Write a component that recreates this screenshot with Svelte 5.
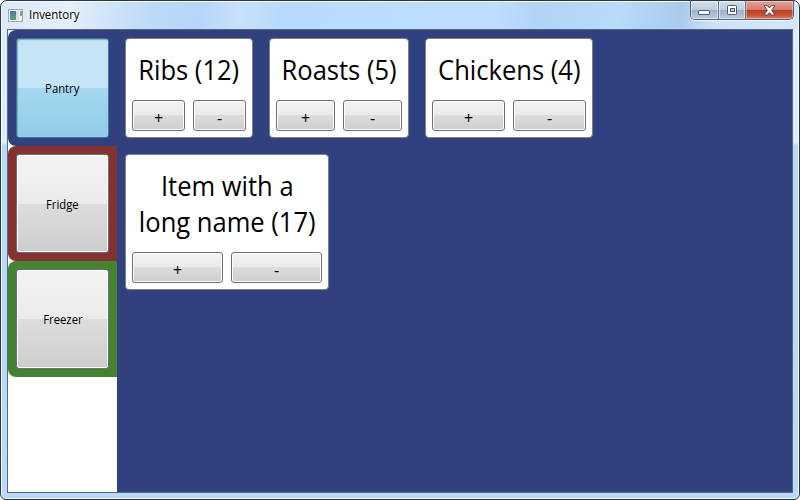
<script>
  const places = [
    { name: 'Pantry', tone: 'blue', selected: true },
    { name: 'Fridge', tone: 'red', selected: false },
    { name: 'Freezer', tone: 'green', selected: false }
  ];
  const items = [
    { lines: ['Ribs (12)'], width: 128 },
    { lines: ['Roasts (5)'], width: 140 },
    { lines: ['Chickens (4)'], width: 168 },
    { lines: ['Item with a', 'long name (17)'], width: 204 }
  ];
</script>

<div class="window">
  <header>
    <svg class="app" width="15" height="13" viewBox="0 0 15 13">
      <defs>
        <linearGradient id="pic" x2="0" y2="1">
          <stop stop-color="#4878a8" /><stop offset="1" stop-color="#57a878" />
        </linearGradient>
      </defs>
      <rect x=".5" y=".5" width="14" height="12" fill="#f5f5f5" stroke="#a0a5a9" />
      <rect x="2" y="2" width="6" height="9" fill="url(#pic)" />
      <rect x="8" y="2" width="3" height="9" fill="#dfe1df" />
      <rect x="12" y="2" width="2" height="5" fill="#73a88e" />
    </svg>
    <span class="caption">Inventory</span>
    <div class="controls">
      <i class="min"><svg width="13" height="6"><rect x=".5" y=".5" width="11" height="4" rx=".5" fill="#fff" stroke="#515b70" /></svg></i>
      <i class="max"><svg width="12" height="10"><rect x="1.5" y=".5" width="9" height="9" rx=".8" fill="#fff" stroke="#515b70" /><rect x="4.5" y="3.5" width="4" height="3" fill="#b9c6d6" stroke="#515b70" /></svg></i>
      <i class="close"><svg width="13" height="11" viewBox="0 0 13 11"><path d="M1 .7H4.5L6.5 3L8.500 .7H12L8.600 5.300L12 10H8.500L6.500 7.600L4.500 10H1L4.400 5.300Z" fill="#fff" stroke="#53556a" /></svg></i>
    </div>
  </header>
  <main>
    <nav>
      {#each places as place}
        <div class="tab {place.tone}">
          <button class:selected={place.selected}><span>{place.name}</span></button>
        </div>
      {/each}
    </nav>
    <section>
      {#each items as item}
        <article style="width: {item.width}px">
          <h2>{#each item.lines as line}<span>{line}</span>{/each}</h2>
          <div class="actions"><button>+</button><button>-</button></div>
        </article>
      {/each}
    </section>
  </main>
</div>

<style>
  :global(body) { background: #fff; }
  * { box-sizing: border-box; }
  .window {
    width: 800px; height: 500px; display: flex; flex-direction: column;
    padding: 0 6px 6px; border: 1px solid #2f3641; border-radius: 7px 7px 6px 6px;
    overflow: hidden; color: #000; font-family: "Open Sans", "Noto Sans", sans-serif;
    background:
      linear-gradient(#e0edfb 0, #deedfc 114px, #b7d8f8 116px, #b9dafa 100%) 0 28px / 100% 100% no-repeat,
      linear-gradient(100deg, #d9e8f8 0, #e4effb 8%, #bddaf8 17%, #b5d6f8 23%, #c8e1fb 27%, #b8dafb 32%, #bddeff 56%, #b2d4f4 61%, #b9dbfa 70%, #a9cced 77%, #cee3f8 81%, #d8eafb 100%);
    box-shadow: inset 0 0 0 1px #f3faff;
  }
  header { height: 28px; display: flex; align-items: flex-start; flex: none; }
  .app { margin: 8px 6px 0 1px; }
  .caption { font-size: 12px; line-height: 16px; margin-top: 6px; transform: scaleX(.95); transform-origin: left; text-shadow: 0 0 6px #fff, 0 0 8px #fff; }
  .controls {
    margin-left: auto; margin-right: -1px; height: 19px; display: flex;
    border: 1px solid #566273; border-top: 0; border-radius: 0 0 5px 5px; overflow: hidden;
    box-shadow: 0 1px 0 #eef7ff;
  }
  .controls i { display: flex; align-items: center; justify-content: center; height: 18px; border-right: 1px solid #66758a; box-shadow: inset 0 0 0 1px #ffffff80; background: linear-gradient(#d2dfed 0, #bdcddd 48%, #9db1c8 50%, #b7cce2 100%); }
  .controls .min { width: 28px; padding-top: 6px; }
  .controls .max { width: 27px; }
  .controls .close { width: 47px; border: 0; background: linear-gradient(#e6a295 0, #d67c6c 48%, #bd3b27 50%, #c75438 80%, #df8669 100%); box-shadow: inset 0 0 0 1px #ffffff60; }
  main { width: 786px; height: 465px; border: 1px solid #596779; display: flex; background: #fff; }
  nav { width: 109px; flex: none; display: flex; flex-direction: column; }
  .tab { height: 116px; padding: 8px; border-radius: 8px 0 0 8px; flex: none; }
  .blue { background: #31407f; }
  .red { background: #843131; height: 115px; }
  .green { background: #438331; }
  button {
    font-family: inherit; color: #000; padding: 0; margin: 0;
    border: 1px solid #707070; border-radius: 3px; box-shadow: inset 0 0 0 1px #fbfbfb;
    background: linear-gradient(#f3f3f3 0, #ebebeb 50%, #dddddd 50%, #cdcdcd 100%);
  }
  .tab button { display: flex; align-items: center; justify-content: center; width: 93px; height: 100px; font-size: 12px; line-height: 16px; padding-top: 2px; }
  .red button { height: 99px; }
  .tab span { transform: scaleX(.94); }
  .tab .selected { border-color: #3c7894; box-shadow: inset 1px 1px 1px #82a9bb; background: linear-gradient(#c4e5f6 0, #c4e5f6 50%, #a6d8f0 50%, #90cbea 100%); }
  section { flex: 1; background: #31407f; padding: 8px; display: flex; flex-wrap: wrap; align-content: flex-start; align-items: flex-start; gap: 16px; padding-right: 70px; }
  article { background: #fff; border: 1px solid #808080; border-radius: 4px; padding: 6px; }
  h2 { margin: 7px -6px 12px; font-weight: 400; font-size: 26.67px; line-height: 36px; display: flex; flex-direction: column; align-items: center; white-space: nowrap; }
  h2 span { transform: scaleX(.958); }
  .actions { display: grid; grid-template-columns: 1fr 1fr; gap: 8px; }
  .actions button { height: 31px; font-size: 16px; line-height: 20px; padding-top: 4px; }
</style>
